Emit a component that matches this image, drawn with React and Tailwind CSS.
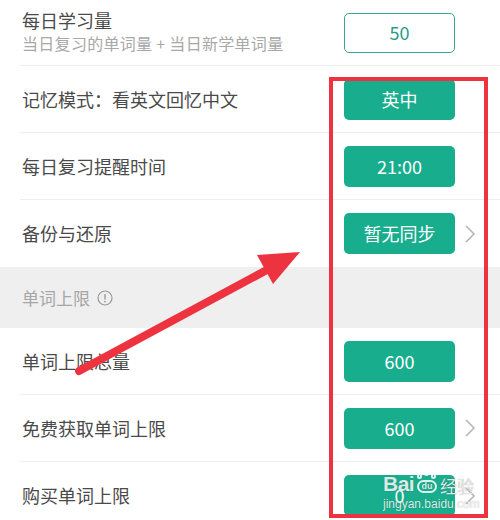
import React from "react";

const font = { fontFamily: '"Noto Sans CJK SC", "Noto Sans", sans-serif' };

function Chevron() {
  return (
    <svg width="14" height="20" viewBox="0 0 14 20" className="ml-[8px]">
      <path d="M3 2 L11 10 L3 18" fill="none" stroke="#b3b3b3" strokeWidth="1.5" />
    </svg>
  );
}

function Btn({ children, chevron }) {
  return (
    <div className="flex items-center w-[156px]">
      <div className="w-[111px] h-[41px] rounded-[5px] bg-[#17ad8d] text-white text-[18px] flex items-center justify-center">
        {children}
      </div>
      {chevron && <Chevron />}
    </div>
  );
}

function Row({ label, value, chevron, last }) {
  return (
    <div className="pl-[20px]">
      <div className={`flex items-center h-[67px] pl-[2px] ${last ? "" : "border-b border-[#efefef]"}`}>
        <div className="flex-1 text-[18px] text-[#4a4a4a]">{label}</div>
        <Btn chevron={chevron}>{value}</Btn>
      </div>
    </div>
  );
}

export default function App() {
  return (
    <div className="relative w-[500px] h-[520px] overflow-hidden bg-white" style={font}>
      <div className="pl-[20px]">
        <div className="flex items-center h-[66px] pl-[2px] border-b border-[#efefef]">
          <div className="flex-1 flex flex-col pb-[2px]">
            <div className="text-[18px] leading-[23px] text-[#4a4a4a]">每日学习量</div>
            <div className="text-[16px] leading-[22px] text-[#a8a8a8] tracking-[0.3px] whitespace-pre">当日复习的单词量 + 当日新学单词量</div>
          </div>
          <div className="w-[156px] flex">
            <div className="w-[111px] h-[40px] rounded-[5px] border border-[#3aa595] text-[#2a9c88] text-[18px] flex items-center justify-center">
              50
            </div>
          </div>
        </div>
      </div>
      <Row label="记忆模式：看英文回忆中文" value="英中" />
      <Row label="每日复习提醒时间" value="21:00" />
      <Row label="备份与还原" value="暂无同步" chevron last />
      <div className="h-[61px] bg-[#efefef] flex items-center pl-[22px] text-[17px] text-[#a6a6a6] gap-[7px]">
        <span>单词上限</span>
        <svg width="16" height="16" viewBox="0 0 16 16">
          <circle cx="8" cy="8" r="7" fill="none" stroke="#9a9a9a" strokeWidth="1.2" />
          <line x1="8" y1="4" x2="8" y2="9.5" stroke="#9a9a9a" strokeWidth="1.4" />
          <circle cx="8" cy="11.6" r="0.9" fill="#9a9a9a" />
        </svg>
      </div>
      <Row label="单词上限总量" value="600" />
      <Row label="免费获取单词上限" value="600" chevron />
      <Row label="购买单词上限" value="0" chevron last />

      {/* annotation overlay */}
      <svg className="absolute left-0 top-0" width="500" height="520" viewBox="0 0 500 520">
        <rect x="331" y="79" width="155" height="437" fill="none" stroke="#ee3340" strokeWidth="4" />
        <line x1="79" y1="371" x2="278" y2="264" stroke="#ee3340" strokeWidth="8" strokeLinecap="round" />
        <polygon points="300,252 257,255 273,284" fill="#ee3340" />
      </svg>

      {/* watermark */}
      <div className="absolute left-[383px] top-[472px] text-white/85 leading-none [text-shadow:0_0_1px_rgba(0,0,0,0.35)]">
        <div className="flex items-end gap-[1px]">
          <span className="text-[21px] font-bold tracking-tight" style={{ fontFamily: '"Liberation Sans", sans-serif' }}>Bai</span>
          <span className="relative w-[24px] h-[22px]">
            <span className="absolute left-[2px] top-[1px] w-[5px] h-[6px] rounded-full border-2 border-white/85"></span>
            <span className="absolute left-[9px] top-[-2px] w-[5px] h-[6px] rounded-full border-2 border-white/85"></span>
            <span className="absolute left-[16px] top-[1px] w-[5px] h-[6px] rounded-full border-2 border-white/85"></span>
            <span className="absolute left-[2px] top-[8px] w-[20px] h-[13px] rounded-full border-2 border-white/85 text-[9px] font-bold flex items-center justify-center" style={{ fontFamily: '"Liberation Sans", sans-serif' }}>du</span>
          </span>
          <span className="text-[17px] text-[#e6e6e6]">经验</span>
        </div>
        <div className="text-[12px] mt-[4px]" style={{ fontFamily: '"Liberation Sans", sans-serif' }}>jingyan.baidu.com</div>
      </div>
    </div>
  );
}
